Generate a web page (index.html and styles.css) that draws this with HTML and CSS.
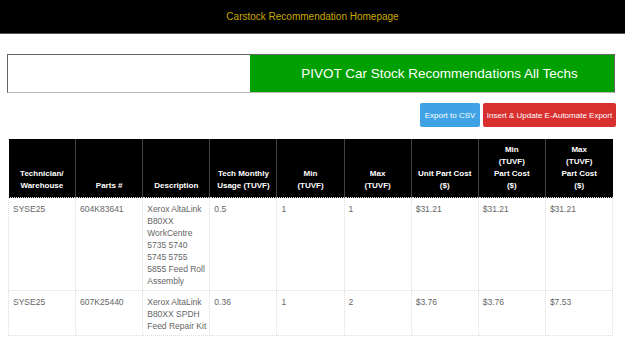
FILE: index.html
```html
<!DOCTYPE html>
<html lang="en">

<head>
    <meta charset="UTF-8">
    <meta name="viewport" content="width=device-width, initial-scale=1.0">
    <title>Carstock Recommendation Homepage</title>
    <link rel="stylesheet" href="styles.css">
</head>

<body>

    <div class="topBar">
        <h3>Carstock Recommendation Homepage</h3>
    </div>

    <div class="banner">
        <div class="bannerLeft"></div>
        <div class="bannerTitle">PIVOT Car Stock Recommendations All Techs</div>
    </div>

    <div class="actions">
        <button class="btn btnBlue">Export to CSV</button>
        <button class="btn btnRed">Insert &amp; Update E-Automate Export</button>
    </div>

    <table class="stockTable">
        <thead>
            <tr>
                <th>Technician/<br>Warehouse</th>
                <th>Parts #</th>
                <th>Description</th>
                <th>Tech Monthly Usage (TUVF)</th>
                <th>Min<br>(TUVF)</th>
                <th>Max<br>(TUVF)</th>
                <th>Unit Part Cost<br>($)</th>
                <th>Min<br>(TUVF)<br>Part Cost<br>($)</th>
                <th>Max<br>(TUVF)<br>Part Cost<br>($)</th>
            </tr>
        </thead>
        <tbody>
            <tr>
                <td>SYSE25</td>
                <td>604K83641</td>
                <td>Xerox AltaLink B80XX WorkCentre 5735 5740 5745 5755 5855 Feed Roll Assembly</td>
                <td>0.5</td>
                <td>1</td>
                <td>1</td>
                <td>$31.21</td>
                <td>$31.21</td>
                <td>$31.21</td>
            </tr>
            <tr>
                <td>SYSE25</td>
                <td>607K25440</td>
                <td>Xerox AltaLink B80XX SPDH Feed Repair Kit</td>
                <td>0.36</td>
                <td>1</td>
                <td>2</td>
                <td>$3.76</td>
                <td>$3.76</td>
                <td>$7.53</td>
            </tr>
        </tbody>
    </table>

</body>

</html>
```

FILE: styles.css
```css
* {margin: 0; padding: 0; box-sizing: border-box;}
body {font-family: "Liberation Sans", Arial, sans-serif; background: #fff;}

.topBar {height: 34px; background: #000; border-bottom: 1px solid #555; display: flex; align-items: center; justify-content: center;}
.topBar h3 {font-size: 10px; font-weight: normal; color: #c8a800;}

.banner {display: flex; height: 39px; margin: 20px 10px 0 7px; border: 1px solid #666; border-bottom-color: #bbb;}
.bannerLeft {width: 242px; background: #fff;}
.bannerTitle {flex: 1; background: #00a000; color: #fff; font-size: 13.5px; padding-left: 15px; display: flex; align-items: center; justify-content: center;}

.actions {display: flex; justify-content: flex-end; gap: 3px; margin: 10px 9px 0 0;}
.btn {height: 24px; border: none; border-radius: 2px; color: #fff; font-family: "Liberation Sans", Arial, sans-serif; font-size: 8px; padding: 0 3px; white-space: nowrap;}
.btnBlue {background: #3ea2e4; width: 60px;}
.btnRed {background: #d7302f; width: 133px;}

.stockTable {width: 605px; margin: 12px 0 0 8px; border-collapse: collapse; table-layout: fixed; font-size: 8.5px; line-height: 12px;}
.stockTable th {background: #000; color: #fff; font-size: 8px; font-weight: bold; text-align: center; vertical-align: bottom; padding: 5px 3px; border-left: 1px solid #444;}
.stockTable th:first-child {border-left: none;}
.stockTable td {color: #666; vertical-align: top; padding: 5px 2px 3px 4px; border: 1px dotted #ddd;}
```
